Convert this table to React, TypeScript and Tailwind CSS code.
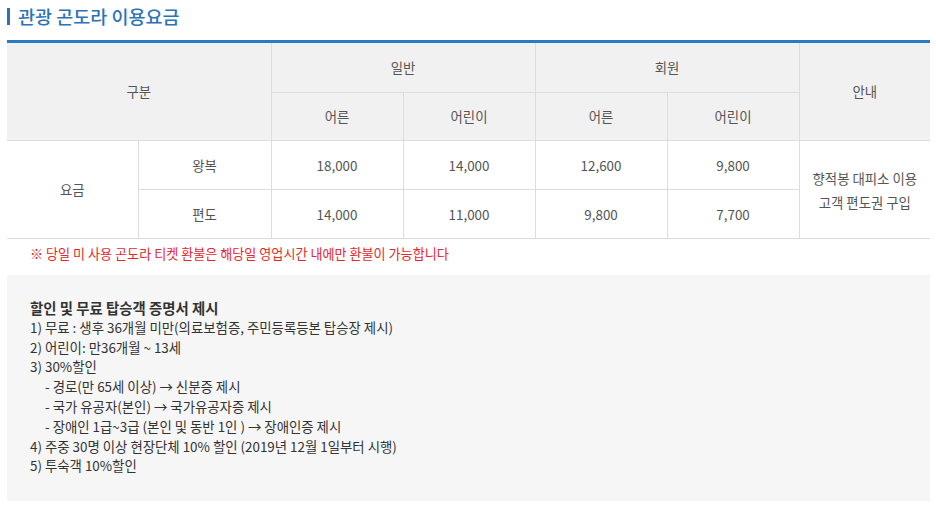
import React from "react";

const font = { fontFamily: '"Noto Sans CJK KR", "Noto Sans", sans-serif' };

const App = () => {
  const th = "border border-[#dddddd] bg-[#f1f1f1] font-normal text-[13.4px] text-[#555555] text-center align-middle";
  const td = "border border-[#dddddd] bg-white text-[13.4px] text-[#555555] text-center align-middle";

  return (
    <div className="w-[936px] h-[507px] bg-white" style={font}>
      <div className="px-[7px] pt-[6px]">
        {/* Title */}
        <h2 className="flex items-center h-[20px] text-[18.5px] font-medium text-[#2b73b6] leading-none">
          <span className="inline-block w-[3px] h-[17px] bg-[#2b73b6] mr-[8px]" />
          관광 곤도라 이용요금
        </h2>

        {/* Price table */}
        <table className="mt-[14px] w-[923px] border-collapse table-fixed border-t-[3px] border-t-[#2b7bc4]">
          <colgroup>
            <col className="w-[131px]" />
            <col className="w-[133px]" />
            <col className="w-[132px]" />
            <col className="w-[132px]" />
            <col className="w-[132px]" />
            <col className="w-[132px]" />
            <col className="w-[131px]" />
          </colgroup>
          <thead>
            <tr className="h-[51px]">
              <th colSpan={2} rowSpan={2} className={th + " border-l-0"}>구분</th>
              <th colSpan={2} className={th + " border-t-0"}>일반</th>
              <th colSpan={2} className={th + " border-t-0"}>회원</th>
              <th rowSpan={2} className={th + " border-r-0 border-t-0"}>안내</th>
            </tr>
            <tr className="h-[48px]">
              <th className={th}>어른</th>
              <th className={th}>어린이</th>
              <th className={th}>어른</th>
              <th className={th}>어린이</th>
            </tr>
          </thead>
          <tbody>
            <tr className="h-[49px]">
              <td rowSpan={2} className={td + " bg-[#f1f1f1] border-l-0"}>요금</td>
              <td className={td}>왕복</td>
              <td className={td}>18,000</td>
              <td className={td}>14,000</td>
              <td className={td}>12,600</td>
              <td className={td}>9,800</td>
              <td rowSpan={2} className={td + " border-r-0 leading-[24px]"}>
                향적봉 대피소 이용
                <br />
                고객 편도권 구입
              </td>
            </tr>
            <tr className="h-[49px]">
              <td className={td}>편도</td>
              <td className={td}>14,000</td>
              <td className={td}>11,000</td>
              <td className={td}>9,800</td>
              <td className={td}>7,700</td>
            </tr>
          </tbody>
        </table>

        {/* Refund notice */}
        <p className="mt-[5px] pl-[23px] text-[13.1px] leading-[20px] text-[#e8262b]">
          ※ 당일 미 사용 곤도라 티켓 환불은 해당일 영업시간 내에만 환불이 가능합니다
        </p>

        {/* Discount info */}
        <div className="mt-[11px] h-[226px] w-[923px] bg-[#f6f6f6] pl-[23px] pt-[23px] text-[13.4px] leading-[19.8px] text-[#333333]">
          <p className="text-[14.4px] font-bold text-[#333333]">할인 및 무료 탑승객 증명서 제시</p>
          <p>1) 무료 : 생후 36개월 미만(의료보험증, 주민등록등본 탑승장 제시)</p>
          <p>2) 어린이: 만36개월 ~ 13세</p>
          <p>3) 30%할인</p>
          <p className="pl-[15px]">- 경로(만 65세 이상) → 신분증 제시</p>
          <p className="pl-[15px]">- 국가 유공자(본인) → 국가유공자증 제시</p>
          <p className="pl-[15px]">- 장애인 1급~3급 (본인 및 동반 1인 ) → 장애인증 제시</p>
          <p>4) 주중 30명 이상 현장단체 10% 할인 (2019년 12월 1일부터 시행)</p>
          <p>5) 투숙객 10%할인</p>
        </div>
      </div>
    </div>
  );
};

export default App;
